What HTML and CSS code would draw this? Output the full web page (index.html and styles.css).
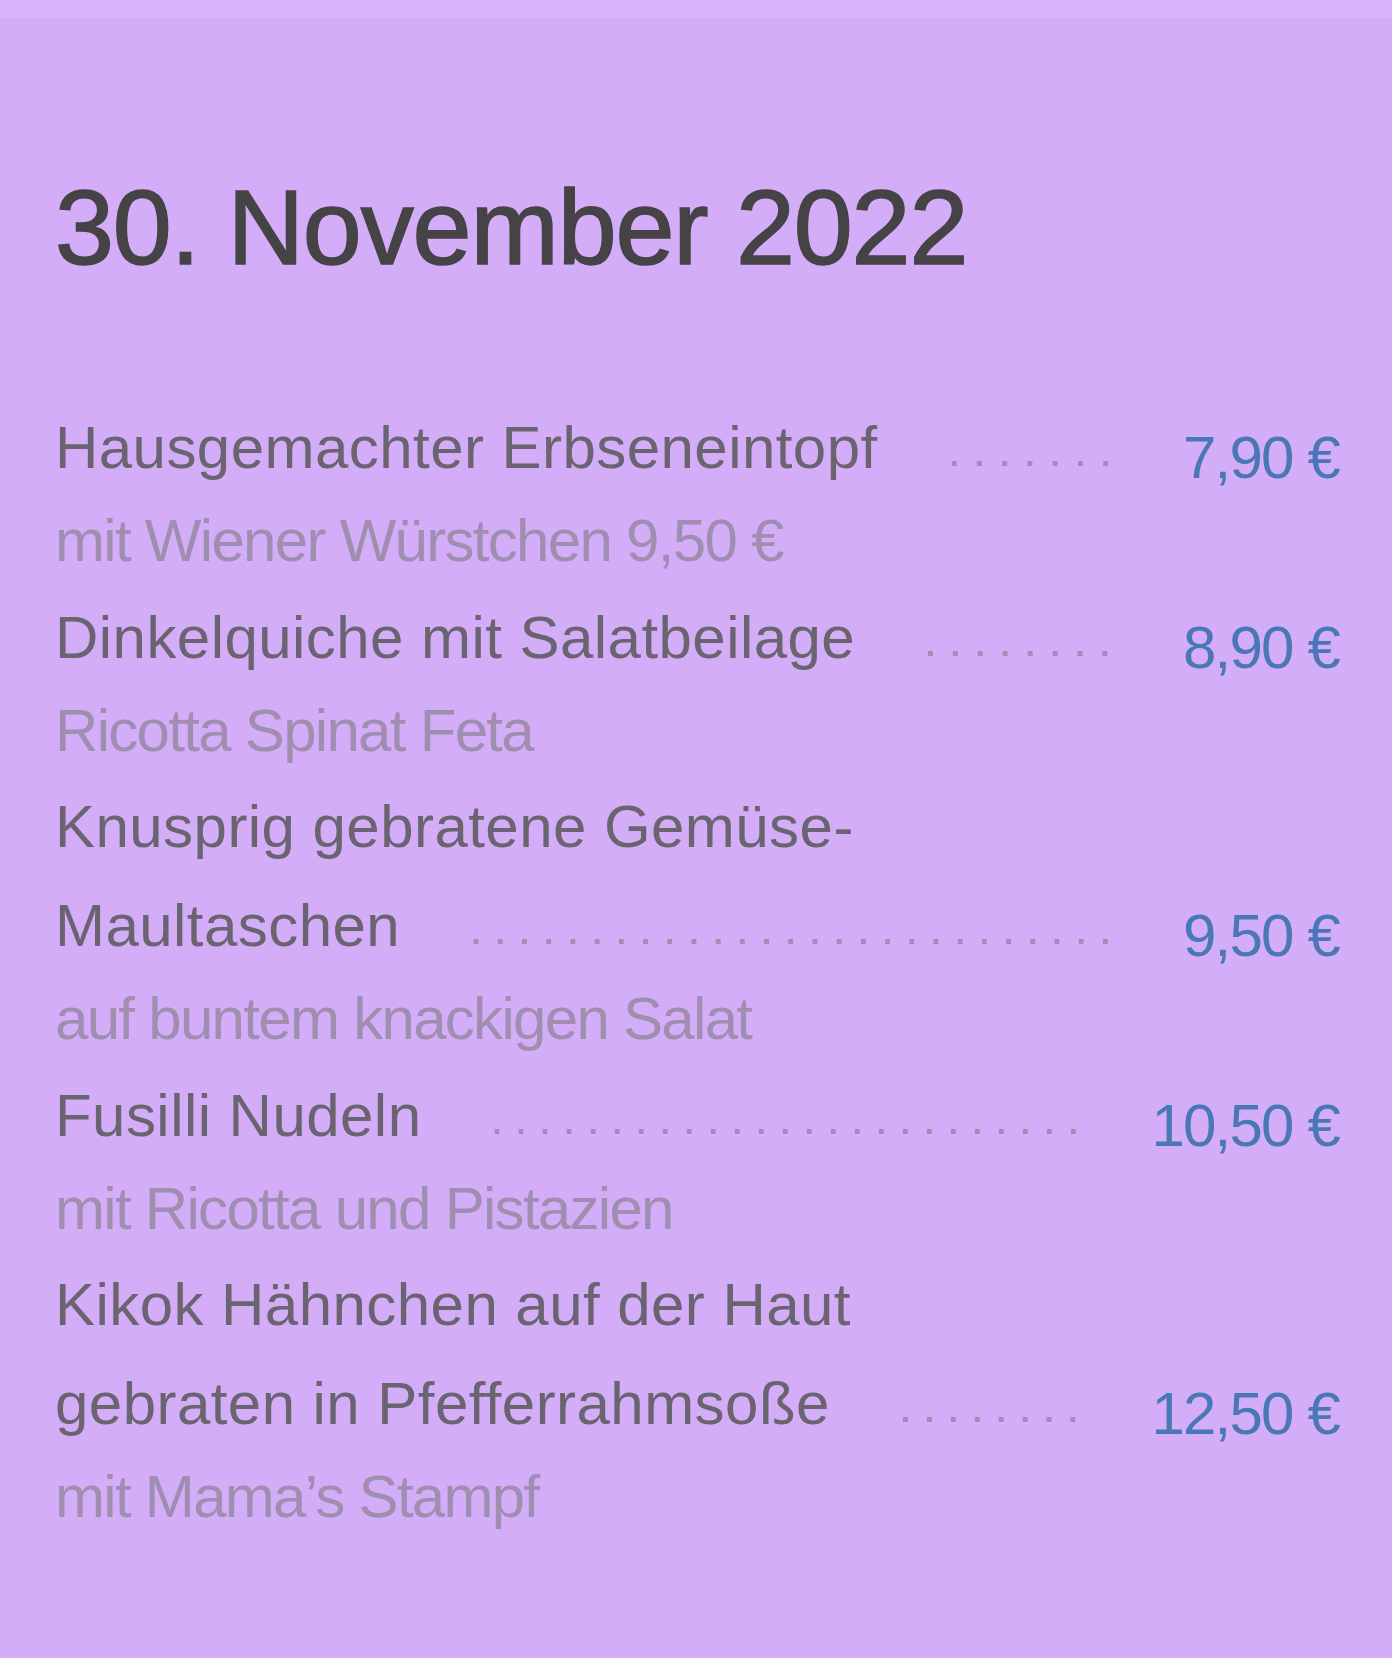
FILE: index.html
```html
<!DOCTYPE html>
<html lang="de">
<head>
<meta charset="utf-8">
<title>Mittagstisch 30. November 2022</title>
<link rel="stylesheet" href="styles.css">
</head>
<body>
<div class="statusbar"></div>
<main class="menu">
  <h1 class="date">30. November 2022</h1>
  <ul class="items">
    <li class="item">
      <div class="row"><span class="name">Hausgemachter Erbseneintopf</span><span class="leader"></span><span class="price">7,90 €</span></div>
      <div class="desc">mit Wiener Würstchen 9,50 €</div>
    </li>
    <li class="item">
      <div class="row"><span class="name">Dinkelquiche mit Salatbeilage</span><span class="leader"></span><span class="price">8,90 €</span></div>
      <div class="desc">Ricotta Spinat Feta</div>
    </li>
    <li class="item">
      <div class="line">Knusprig gebratene Gemüse-</div>
      <div class="row"><span class="name">Maultaschen</span><span class="leader"></span><span class="price">9,50 €</span></div>
      <div class="desc">auf buntem knackigen Salat</div>
    </li>
    <li class="item">
      <div class="row"><span class="name">Fusilli Nudeln</span><span class="leader"></span><span class="price">10,50 €</span></div>
      <div class="desc">mit Ricotta und Pistazien</div>
    </li>
    <li class="item">
      <div class="line">Kikok Hähnchen auf der Haut</div>
      <div class="row"><span class="name">gebraten in Pfefferrahmsoße</span><span class="leader"></span><span class="price">12,50 €</span></div>
      <div class="desc">mit Mama’s Stampf</div>
    </li>
  </ul>
</main>
</body>
</html>
```
FILE: styles.css
```css
html, body {
  margin: 0;
  padding: 0;
  background: #d4adf8;
}

body {
  font-family: "Liberation Sans", Arial, Helvetica, sans-serif;
  min-height: 1658px;
}

.statusbar {
  height: 18px;
  background: #d8b2fc;
}

.menu {
  padding: 156px 53px 0 55px;
}

.date {
  margin: 0;
  font-size: 106px;
  line-height: 106px;
  font-weight: 400;
  letter-spacing: -1.1px;
  -webkit-text-stroke: 1.6px #454346;
  color: #454346;
}

.items {
  list-style: none;
  margin: 118px 0 0;
  padding: 0;
  display: flex;
  flex-direction: column;
  gap: 3.5px;
}

.line,
.row {
  font-size: 60px;
  line-height: 99px;
  letter-spacing: 0.45px;
  color: #6a6370;
  white-space: nowrap;
}

.row {
  display: flex;
  align-items: flex-start;
}

.leader {
  flex: 1;
  height: 99px;
  margin: 0 66px 0 64px;
  background-image: linear-gradient(to right, transparent 9.25px, #a48cb6 9.25px, #a48cb6 14.25px, transparent 14.25px);
  background-size: 23.5px 5px;
  background-position: 0 63px;
  background-repeat: space no-repeat;
}

.price {
  padding-top: 21px;
  line-height: 78px;
  letter-spacing: -1.8px;
  color: #4a78b6;
}

.desc {
  font-size: 60px;
  line-height: 87px;
  letter-spacing: -1.7px;
  color: #a08eb0;
  white-space: nowrap;
}
```
